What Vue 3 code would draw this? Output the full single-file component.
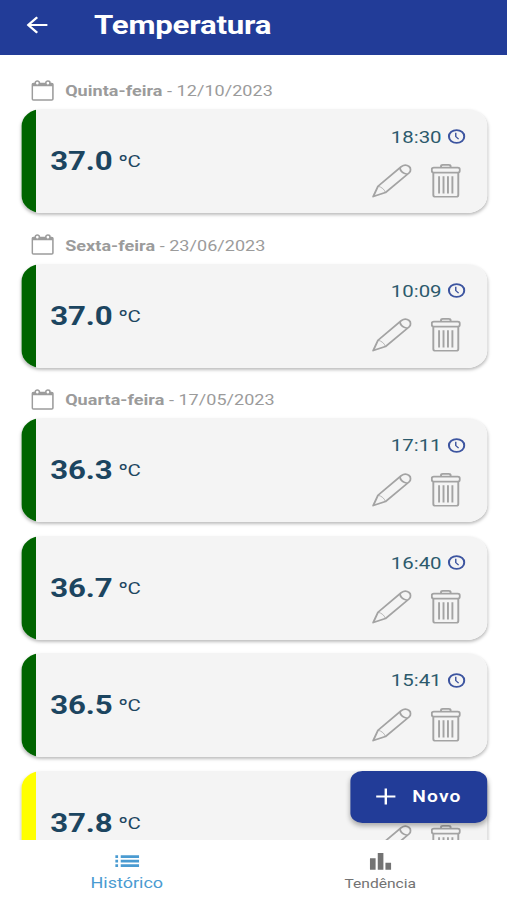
<template>
  <div class="screen">
    <header class="topbar">
      <svg class="back" viewBox="0 0 18 18" fill="none" stroke="#fff" stroke-width="2">
        <path d="M17.5 9H1.5M9 1.3L1.5 9L9 16.7" />
      </svg>
      <h1>Temperatura</h1>
    </header>

    <main class="list">
      <section v-for="day in days" :key="day.date">
        <div class="day">
          <svg class="calendar" viewBox="0 0 19 21" fill="none" stroke="#9c9c9c" stroke-width="1.3">
            <rect x="0.9" y="3.4" width="17.2" height="16.6" rx="1" />
            <path d="M1 4.9H18" stroke-width="2.6" />
            <rect x="3.4" y="1" width="3.4" height="4.2" rx="1.7" fill="#fff" />
            <rect x="12.2" y="1" width="3.4" height="4.2" rx="1.7" fill="#fff" />
          </svg>
          <span class="text"><b>{{ day.name }}</b> - {{ day.date }}</span>
        </div>

        <article v-for="(r, i) in day.records" :key="i" class="card" :class="r.level">
          <div class="reading"><span class="value">{{ r.value }}</span><span class="unit">ºC</span></div>
          <div class="side">
            <div class="time">
              <template v-if="r.time">
                <span>{{ r.time }}</span>
                <svg class="clock" viewBox="0 0 15 15" fill="none" stroke="#3d55a0" stroke-width="1.7">
                  <circle cx="7.5" cy="7.5" r="6.4" />
                  <path d="M6.8 3.8V7.6L9.2 10.2" stroke-width="1.2" />
                </svg>
              </template>
            </div>
            <div class="actions">
              <svg class="pencil" viewBox="0 0 33 34" fill="none" stroke="#a3a3a3" stroke-width="1.6" stroke-linejoin="round">
                <path d="M1 32.6L5 22.2L24.4 2.6Q27.8 -0.4 30.8 2.4Q33.6 5.6 30.8 9L11.2 28.6Z" />
                <path d="M23.2 3.9Q24 9 29.4 10.3" />
                <path d="M5 22.2Q9.8 23.6 11.2 28.6" stroke-width="0.7" />
              </svg>
              <svg class="trash" viewBox="0 0 25 34" fill="none" stroke="#a3a3a3" stroke-width="1.6">
                <rect x="0.8" y="3.6" width="23.4" height="5" rx="1.8" />
                <path d="M8.5 3.6V2.4Q8.5 0.9 10 0.9H15Q16.5 0.9 16.5 2.4V3.6" />
                <path d="M2.1 8.6V31Q2.1 32.8 3.8 32.8H21.2Q22.9 32.8 22.9 31V8.6" />
                <path d="M6.9 12.2V29.6M10.6 12.2V29.6M14.3 12.2V29.6M18 12.2V29.6" />
              </svg>
            </div>
          </div>
        </article>
      </section>
    </main>

    <button class="new">
      <svg viewBox="0 0 17 17" stroke="#fff" stroke-width="2"><path d="M8.5 0.5V16.5M0.5 8.5H16.5" /></svg>
      <span>Novo</span>
    </button>

    <nav class="tabs">
      <a class="tab active">
        <svg viewBox="0 0 20 18" fill="currentColor">
          <path d="M0 2.2h2.4v2.8H0zM0 6.8h2.4v2.8H0zM0 11.2h2.4v2.8H0zM4.6 2.2H20v2.8H4.6zM4.6 6.8H20v2.8H4.6zM4.6 11.2H20v2.8H4.6z" />
        </svg>
        <span>Histórico</span>
      </a>
      <a class="tab">
        <svg viewBox="0 0 20 18" fill="currentColor">
          <path d="M1.3 5.2h4.7v11.6H1.3zM7.8 0h4.7v16.8H7.8zM14.2 9.8h4.7v7h-4.7z" />
        </svg>
        <span>Tendência</span>
      </a>
    </nav>
  </div>
</template>

<script setup>
const days = [
  {
    name: 'Quinta-feira',
    date: '12/10/2023',
    records: [{ value: '37.0', time: '18:30', level: 'normal' }]
  },
  {
    name: 'Sexta-feira',
    date: '23/06/2023',
    records: [{ value: '37.0', time: '10:09', level: 'normal' }]
  },
  {
    name: 'Quarta-feira',
    date: '17/05/2023',
    records: [
      { value: '36.3', time: '17:11', level: 'normal' },
      { value: '36.7', time: '16:40', level: 'normal' },
      { value: '36.5', time: '15:41', level: 'normal' },
      { value: '37.8', time: '', level: 'warning' }
    ]
  }
]
</script>

<style>
body { margin:0; background:#fff; overflow:hidden }
</style>

<style scoped>
/* wide display: the whole screen is stretched sideways */
.screen{
  position:relative; width:calc(100% / 1.2); height:100vh; overflow:hidden;
  display:flex; flex-direction:column; background:#fff;
  font-family:Roboto, "Liberation Sans", sans-serif;
  transform:scaleX(1.2); transform-origin:0 0;
}

.topbar{ flex:none; height:55px; box-sizing:border-box; background:#223c98; color:#fff;
  display:flex; align-items:center; padding:0 0 5px 22.4px }
.back{ width:18px; height:18px }
h1{ margin:0 0 0 38px; font-size:26px; line-height:30px; font-weight:700; letter-spacing:-.17px }

.list{ flex:1; min-height:0; overflow:hidden; padding:17.4px 16.5px 0 17.5px }
.day{ height:36.9px; display:flex; align-items:center; padding-left:8.8px; color:#9b9b9b; font-size:15px }
.day .text{ padding-top:1px; letter-spacing:.04px }
.calendar{ width:19px; height:21px; margin:-1px 9px 0 0 }
.day b{ font-weight:700 }

.card{ height:104px; margin-bottom:13.5px; overflow:hidden; border-radius:17px;
  background:linear-gradient(90deg, #006400 12.2px, #f4f4f4 12.2px);
  box-shadow:0 2px 3px rgba(0,0,0,.26);
  display:flex; justify-content:space-between }
.card.warning{ background:linear-gradient(90deg, #ff0 12.2px, #f4f4f4 12.2px) }
.reading{ display:flex; align-items:flex-start; padding:36px 0 0 24.3px; color:#1c4560 }
.value{ font-size:26px; line-height:32px; font-weight:700; letter-spacing:-.1px }
.unit{ font-size:17px; line-height:32px; margin-left:5px; letter-spacing:-.2px }

.side{ display:flex; flex-direction:column; align-items:flex-end; padding:17.3px 18px 0 0 }
.time{ display:flex; align-items:center; gap:5px; height:20px; color:#2c5a6c; font-size:17px }
.clock{ width:15px; height:15px }
.actions{ display:flex; gap:16px; margin:17.5px 4.2px 0 0 }
.pencil{ width:33px; height:34px }
.trash{ width:25px; height:34px }

.new{ position:absolute; left:291.5px; top:770.5px; width:114px; height:52px; padding:0 0 0 21.5px;
  display:flex; align-items:center; border:0; border-radius:10px; background:#223c98; color:#fff;
  font-family:inherit; font-size:16px; font-weight:600; letter-spacing:1px;
  box-shadow:0 3px 5px rgba(0,0,0,.3) }
.new svg{ width:17px; height:17px; margin-right:13.5px }

.tabs{ flex:none; height:60px; display:flex; background:#fff }
.tab{ flex:1; display:flex; flex-direction:column; align-items:center; padding-top:13px;
  color:#737373; font-size:13px; line-height:18px }
.tab svg{ width:20px; height:18px; margin-bottom:4px }
.tab.active{ color:#4a9bd1; font-size:15px }
.tab.active span{ margin-top:-1px }
</style>
